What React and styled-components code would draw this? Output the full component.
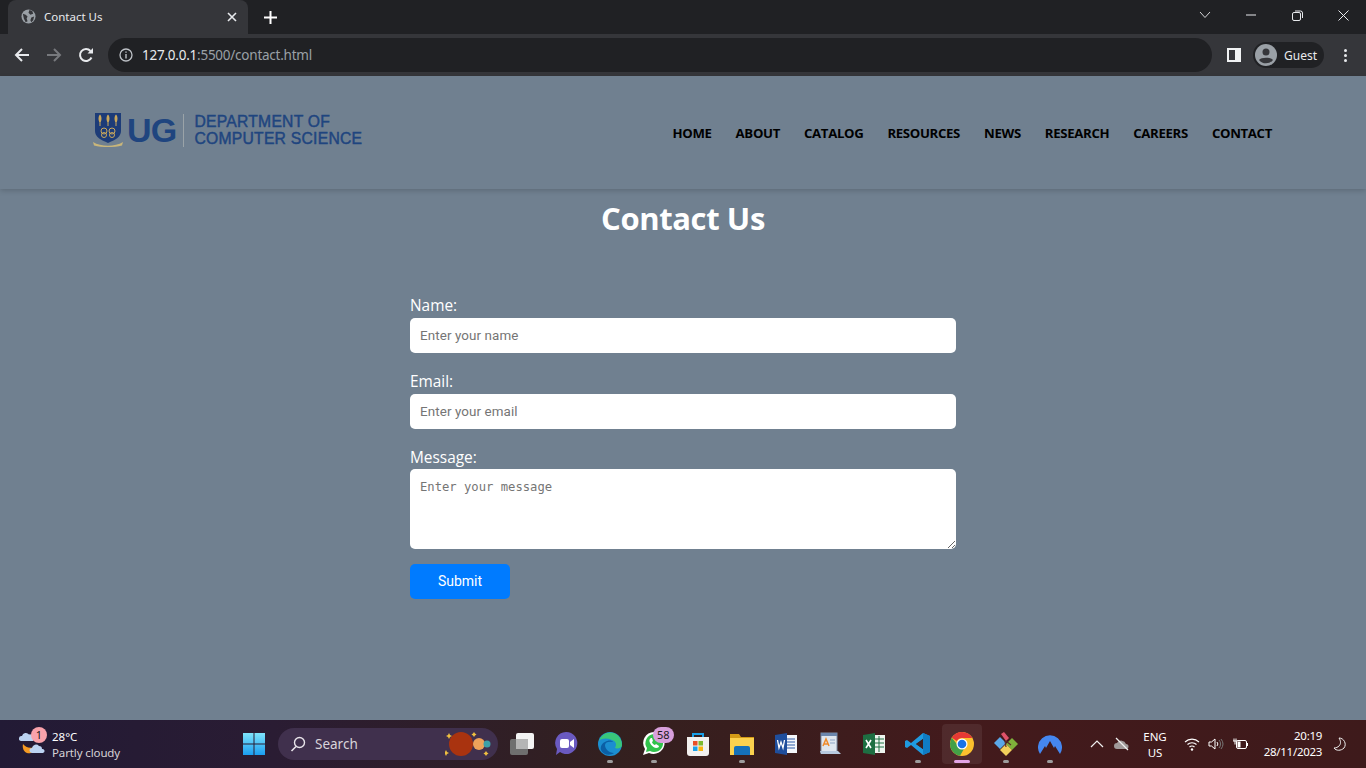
import styled, { createGlobalStyle } from "styled-components";

const GlobalStyle = createGlobalStyle`
  html, body {
    margin: 0;
    padding: 0;
    height: 100%;
    overflow: hidden;
    background: #708090;
  }
  * {
    box-sizing: border-box;
  }
`;

const Screen = styled.div`
  width: 1366px;
  height: 768px;
  display: flex;
  flex-direction: column;
  overflow: hidden;
  font-family: "Open Sans", sans-serif;
`;

/* browser chrome */
const TabStrip = styled.div`
  height: 34px;
  background: #202124;
  display: flex;
  align-items: flex-end;
  padding-left: 8px;
`;

const Tab = styled.div`
  width: 240px;
  height: 34px;
  background: #35363a;
  border-radius: 8px 8px 0 0;
  display: flex;
  align-items: center;
  padding: 0 11px 1px 13px;
  color: #e8eaed;
  font-size: 11.5px;
  font-family: "Noto Sans", sans-serif;
`;

const TabTitle = styled.span`
  flex: 1;
  margin-left: 8px;
`;

const NewTab = styled.div`
  width: 44px;
  height: 34px;
  display: flex;
  align-items: center;
  justify-content: center;
`;

const WindowButtons = styled.div`
  margin-left: auto;
  height: 34px;
  display: flex;
  align-items: center;
`;

const WindowButton = styled.div`
  width: 46px;
  height: 30px;
  margin-bottom: 4px;
  display: flex;
  align-items: center;
  justify-content: center;
`;

const Toolbar = styled.div`
  height: 42px;
  background: #35363a;
  display: flex;
  align-items: center;
  padding: 0 8px 0 6px;
`;

const NavIcon = styled.div`
  width: 32px;
  height: 32px;
  display: flex;
  align-items: center;
  justify-content: center;
`;

const AddressBar = styled.div`
  width: 1104px;
  height: 34px;
  margin-left: 6px;
  background: #202124;
  border-radius: 17px;
  display: flex;
  align-items: center;
  padding-left: 11px;
  font-size: 13.5px;
  font-family: "Noto Sans", sans-serif;
  letter-spacing: -0.24px;
`;

const Host = styled.span`
  margin-left: 9px;
  color: #e8eaed;
`;

const UrlPath = styled.span`
  color: #9aa0a6;
`;

const ProfileArea = styled.div`
  flex: 1;
  display: flex;
  align-items: center;
  padding-left: 15px;
`;

const GuestPill = styled.div`
  margin-left: 12px;
  width: 71px;
  height: 26px;
  background: #202124;
  border-radius: 13px;
  display: flex;
  align-items: center;
  padding-left: 2px;
  gap: 7px;
  color: #e8eaed;
  font-size: 12px;
  font-family: "Noto Sans", sans-serif;
`;

const MenuDots = styled.div`
  margin-left: auto;
  margin-right: 11px;
  display: flex;
  flex-direction: column;
  gap: 2px;
  i {
    display: block;
    width: 3px;
    height: 3px;
    border-radius: 50%;
    background: #e8eaed;
  }
`;

/* page */
const Page = styled.div`
  flex: 1;
  background: #708090;
  display: flex;
  flex-direction: column;
  align-items: center;
`;

const SiteHeader = styled.header`
  width: 100%;
  height: 113px;
  flex-shrink: 0;
  display: flex;
  align-items: center;
  justify-content: space-between;
  padding: 0 94px 0 93px;
  box-shadow: 0 2px 5px rgba(0, 0, 0, 0.16);
`;

const Logo = styled.div`
  display: flex;
  align-items: center;
  color: #1f457f;
  font-family: "Liberation Sans", Arial, sans-serif;
  margin-bottom: 5px;
`;

const LogoMark = styled.span`
  font-size: 34px;
  font-weight: 700;
  line-height: 34px;
  margin-left: 4px;
  letter-spacing: -0.8px;
`;

const LogoRule = styled.div`
  width: 1px;
  height: 33px;
  background: #9aa3a8;
  margin: 0 10px 0 7px;
`;

const LogoText = styled.div`
  font-size: 15.7px;
  line-height: 17px;
  font-weight: 400;
  -webkit-text-stroke: 0.45px #1f457f;
  letter-spacing: 0.25px;
`;

const Nav = styled.nav`
  display: flex;
  gap: 24px;
  margin-top: 1px;
`;

const NavLink = styled.a`
  color: #000;
  font-size: 13.2px;
  font-weight: 700;
  font-family: "Open Sans", sans-serif;
  letter-spacing: -0.33px;
  text-decoration: none;
`;

const Title = styled.h1`
  margin: 7px 0 0;
  color: #fff;
  font-size: 31px;
  line-height: 44px;
  font-weight: 700;
  font-family: "Open Sans", sans-serif;
  letter-spacing: -0.4px;
`;

const Form = styled.form`
  width: 546px;
  margin-top: 57px;
  display: flex;
  flex-direction: column;
`;

const Label = styled.label`
  color: #fff;
  font-size: 15.4px;
  line-height: 17px;
  height: ${(p) => p.$height}px;
  margin-top: ${(p) => p.$gap}px;
  font-family: "Open Sans", sans-serif;
`;

const Input = styled.input`
  height: 35px;
  border: 0;
  border-radius: 5px;
  background: #fff;
  padding: 0 10px;
  font-size: 13.4px;
  font-family: "Roboto", sans-serif;
  letter-spacing: 0.1px;
  &::placeholder {
    color: #757575;
    opacity: 1;
  }
`;

const TextArea = styled.textarea`
  height: 80px;
  border: 0;
  border-radius: 5px;
  background: #fff;
  padding: 11px 10px;
  font-size: 12.2px;
  line-height: 14px;
  font-family: "DejaVu Sans Mono", monospace;
  &::placeholder {
    color: #757575;
    opacity: 1;
  }
`;

const Submit = styled.button`
  width: 100px;
  height: 35px;
  margin-top: 15px;
  padding: 0 0 1px;
  border: 0;
  border-radius: 5px;
  background: #007bff;
  color: #fff;
  font-size: 14px;
  font-weight: 400;
  font-family: "Roboto", sans-serif;
`;

/* taskbar */
const Taskbar = styled.div`
  height: 48px;
  flex-shrink: 0;
  display: flex;
  align-items: center;
  background: linear-gradient(90deg, #221a35 0%, #2a1c33 20%, #33201f 45%, #431a1c 70%, #3e1a1b 100%);
  font-family: "Noto Sans", sans-serif;
`;

const Weather = styled.div`
  position: relative;
  width: 232px;
  height: 48px;
  display: flex;
  align-items: center;
  padding-left: 19px;
`;

const WeatherText = styled.div`
  margin: 2px 0 0 5px;
  color: #fff;
  font-size: 11.5px;
  line-height: 16px;
  span {
    display: block;
    color: #d6d2d6;
    letter-spacing: -0.12px;
  }
`;

const Badge = styled.div`
  position: absolute;
  height: 16px;
  min-width: 16px;
  border-radius: 8px;
  background: ${(p) => p.$bg};
  color: #1a1a1a;
  font-size: 11px;
  line-height: 16px;
  text-align: center;
  padding: 0 ${(p) => p.$pad}px;
  left: ${(p) => p.$left}px;
  top: ${(p) => p.$top}px;
`;

const TaskCell = styled.div`
  position: relative;
  width: ${(p) => (p.$active ? 40 : 44)}px;
  height: 40px;
  margin: 0 ${(p) => (p.$active ? 2 : 0)}px;
  display: flex;
  align-items: center;
  justify-content: center;
  border-radius: 4px;
  background: ${(p) => (p.$active ? "rgba(255,255,255,0.07)" : "transparent")};
  &::after {
    content: "";
    display: ${(p) => (p.$dot || p.$active ? "block" : "none")};
    position: absolute;
    bottom: 1px;
    left: 50%;
    transform: translateX(-50%);
    width: ${(p) => (p.$active ? 16 : 6)}px;
    height: 3px;
    border-radius: 2px;
    background: ${(p) => (p.$active ? "#e3a5e6" : "#9d9d9d")};
  }
`;

const SearchBox = styled.div`
  position: relative;
  width: 220px;
  height: 32px;
  margin: 0 2px;
  border-radius: 16px;
  background: #40304d;
  display: flex;
  align-items: center;
  padding-left: 12px;
  gap: 9px;
  color: #d8d4da;
  font-size: 13.5px;
`;

const SearchArt = styled.svg`
  position: absolute;
  right: 5px;
  top: 2px;
`;

const Tray = styled.div`
  flex: 1;
  display: flex;
  align-items: center;
  padding-left: 13px;
  color: #fff;
`;

const TrayIcon = styled.div`
  width: 24px;
  height: 24px;
  margin-left: ${(p) => p.$gap || 0}px;
  display: flex;
  align-items: center;
  justify-content: center;
`;

const Lang = styled.div`
  width: 50px;
  margin: 2px 0 0 -3px;
  text-align: center;
  font-size: 11.5px;
  line-height: 16px;
`;

const Clock = styled.div`
  width: 70px;
  text-align: right;
  font-size: 11.5px;
  line-height: 16px;
  letter-spacing: -0.3px;
`;

/* drawings */
const Globe = () => (
  <svg width="15" height="15" viewBox="0 0 16 16">
    <circle cx="8" cy="8" r="7.500" fill="#9aa0a6" />
    <path d="M2 5l3 1 2 2-1 2 1 3-2 1-2-4zM9 1l3 1 1 3-3 1-2-2zM11 9l3-1-1 4-2 2-1-2z" fill="#35363a" />
  </svg>
);

const Crest = () => (
  <svg width="30" height="36" viewBox="0 0 30 36">
    <path d="M2 1h26v18c0 6-6 9-13 12C8 28 2 25 2 19z" fill="#1d3c78" />
    <path d="M7 2.500c2 2 2 6 0 9-2-3-2-7 0-9zM15 2.500c2 2 2 6 0 9-2-3-2-7 0-9zM23 2.500c2 2 2 6 0 9-2-3-2-7 0-9z" fill="#c9a75c" />
    <path d="M7 11v3M15 11v3M23 11v3" stroke="#c9a75c" />
    <g fill="none" stroke="#c9a75c" strokeWidth="1">
      <circle cx="11" cy="19" r="3" />
      <circle cx="19" cy="19" r="3" />
      <circle cx="11" cy="23" r="2.500" />
      <circle cx="19" cy="23" r="2.500" />
    </g>
    <path d="M0 30c8 5 22 5 30 0l-1 3.500c-8 2-20 2-28 0z" fill="#c9b67a" />
  </svg>
);

const WeatherIcon = () => (
  <svg width="28" height="28" viewBox="0 0 28 28">
    <path d="M4 14c3 4 8 5 14 2-2 6-6 8-10 7-3-1-5-5-4-9z" fill="#f59a23" />
    <path d="M2 11a2.500 2.500 0 0 1 1-5 4 4 0 0 1 7-1.500A3 3 0 0 1 14 7v4z" fill="#bcd3f2" />
    <path d="M13 23a2.500 2.500 0 0 1 0-5 4 4 0 0 1 7-2 3 3 0 0 1 3 3 2 2 0 0 1 1 4z" fill="#bcd3f2" />
  </svg>
);

const WinLogo = () => (
  <svg width="24" height="24" viewBox="0 0 24 24">
    <defs>
      <linearGradient id="win" x1="0" y1="0" x2="0" y2="1">
        <stop offset="0" stopColor="#7fe4fb" />
        <stop offset="1" stopColor="#1a9df0" />
      </linearGradient>
    </defs>
    <path d="M1 1h10.500v10.500H1zM12.500 1H23v10.500H12.500zM1 12.500h10.500V23H1zM12.500 12.500H23V23H12.500z" fill="url(#win)" />
  </svg>
);

const TaskView = () => (
  <svg width="26" height="24" viewBox="0 0 26 24">
    <rect x="1" y="7" width="18" height="16" rx="2" fill="#6f6f6f" />
    <rect x="7" y="1" width="18" height="16" rx="2" fill="#f4f4f4" />
    <rect x="7" y="7" width="12" height="10" fill="#b5b5b5" />
  </svg>
);

const MeetIcon = () => (
  <svg width="24" height="26" viewBox="0 0 24 26">
    <path d="M12 1a11 11 0 1 1-6 20l-4 3 1-6A11 11 0 0 1 12 1z" fill="#6a5ac0" />
    <rect x="6" y="8" width="9" height="9" rx="2" fill="#fff" />
    <path d="M16 11l4-3v9l-4-3z" fill="#fff" />
  </svg>
);

const EdgeIcon = () => (
  <svg width="24" height="24" viewBox="0 0 24 24">
    <circle cx="12" cy="12" r="12" fill="#1b8ed0" />
    <path d="M1 9C3 2 10-1 16 1c5 2 8 7 8 12 0 3-4 4-7 3 2-3 1-7-3-8C9 6 4 6 1 9z" fill="#39c67a" />
    <path d="M7 13c0 4 4 8 9 8-4 3-11 2-13-3-1-3 1-7 4-8 3-2 7-2 8 0-4-1-8 0-8 3z" fill="#0b5fa5" />
  </svg>
);

const WhatsAppIcon = () => (
  <svg width="24" height="26" viewBox="0 0 24 26">
    <path d="M12 1a11 11 0 1 1-5 21l-6 2 2-6A11 11 0 0 1 12 1z" fill="#fff" />
    <path d="M12 3a9 9 0 1 1-4 17l-4 1 1-4A9 9 0 0 1 12 3z" fill="#31c34c" />
    <path d="M9 7c-2 1-2 3-1 5s4 5 6 5 3-1 3-2l-3-2-1 1c-1 0-3-2-3-3l1-1-1-3z" fill="#fff" />
  </svg>
);

const StoreIcon = () => (
  <svg width="24" height="26" viewBox="0 0 24 26">
    <path d="M7 7V3h10v4" fill="none" stroke="#1aa0e8" strokeWidth="2" />
    <path d="M1 6h22v16a3 3 0 0 1-3 3H4a3 3 0 0 1-3-3z" fill="#f3f1ef" />
    <rect x="7" y="10" width="4.500" height="4.500" fill="#ea4f25" />
    <rect x="12.500" y="10" width="4.500" height="4.500" fill="#7dba2f" />
    <rect x="7" y="15.500" width="4.500" height="4.500" fill="#1aa0e8" />
    <rect x="12.500" y="15.500" width="4.500" height="4.500" fill="#f9b50f" />
  </svg>
);

const FolderIcon = () => (
  <svg width="24" height="22" viewBox="0 0 24 22">
    <path d="M0 1h9l2 3h13v18H0z" fill="#d39a16" />
    <path d="M0 5h24v17H0z" fill="#fbd14e" />
    <path d="M4 15a2 2 0 0 1 2-2h12a2 2 0 0 1 2 2v7H4z" fill="#1570b8" />
  </svg>
);

const WordIcon = () => (
  <svg width="24" height="24" viewBox="0 0 24 24">
    <rect x="10" y="3" width="13" height="18" fill="#f5f7fb" />
    <path d="M13 7h8M13 10h8M13 13h8M13 16h8" stroke="#2f5da8" strokeWidth="1.200" />
    <path d="M1 3l12-2v22L1 21z" fill="#1f4e9c" />
    <path d="M3.500 8l1.500 8 2-6 2 6 1.500-8" fill="none" stroke="#fff" strokeWidth="1.300" />
  </svg>
);

const AccessoryIcon = () => (
  <svg width="22" height="24" viewBox="0 0 22 24">
    <rect x="2" y="1" width="16" height="20" fill="#dfe6ef" stroke="#7d8ca3" />
    <path d="M2 1h16v3H2z" fill="#6b86ad" />
    <path d="M4 14l3-7 3 7M5 12h4" fill="none" stroke="#ef8a2b" strokeWidth="1.500" />
    <path d="M11 8h5M11 11h5" stroke="#8fa5c6" />
    <path d="M1 19h18l3 3H2z" fill="#b7c9df" />
  </svg>
);

const ExcelIcon = () => (
  <svg width="24" height="24" viewBox="0 0 24 24">
    <rect x="10" y="3" width="13" height="18" fill="#eef5ef" />
    <path d="M13 7h9M13 11h9M13 15h9M17 4v16" stroke="#1f7244" />
    <path d="M1 3l12-2v22L1 21z" fill="#1d6f42" />
    <path d="M4 8l5 8M9 8l-5 8" stroke="#fff" strokeWidth="1.600" />
  </svg>
);

const VsCodeIcon = () => (
  <svg width="26" height="24" viewBox="0 0 26 24">
    <path d="M18 1l7 3v16l-7 3L6 13l-4 3-2-1V9l2-1 4 3zM18 7l-7 5 7 5z" fill="#1f9ae0" />
    <path d="M18 1l7 3v16l-7 3z" fill="#0f7cc4" />
    <path d="M18 7l-7 5 7 5z" fill="#3c2020" />
  </svg>
);

const ChromeIcon = () => (
  <svg width="24" height="24" viewBox="0 0 24 24">
    <circle cx="12" cy="12" r="12" fill="#fbc02d" />
    <path d="M12 0a12 12 0 0 1 10.400 6H12a6 6 0 0 0-5.200 3L1.800 5.700A12 12 0 0 1 12 0z" fill="#e53935" />
    <path d="M1.800 5.700A12 12 0 0 0 10 23.800L15 15a6 6 0 0 1-8.200-3z" fill="#43a047" />
    <circle cx="12" cy="12" r="5.500" fill="#fff" />
    <circle cx="12" cy="12" r="4.300" fill="#1a73e8" />
  </svg>
);

const GitIcon = () => (
  <svg width="26" height="26" viewBox="0 0 26 26">
    <path d="M7 6l6 6-6 6-6-6z" fill="#5ba7e8" />
    <path d="M19 7l6 6-6 6-6-6z" fill="#7fb03a" />
    <path d="M13 13l6 6-6 6-6-6z" fill="#f2cf5b" />
    <path d="M8 3l3-2 5 6-3 3z" fill="#e0526a" />
    <path d="M12 10l1 6M13 10l5 4" stroke="#5a2a2a" strokeWidth="1.200" />
  </svg>
);

const NordIcon = () => (
  <svg width="24" height="24" viewBox="0 0 24 24">
    <path d="M2 22a12 12 0 1 1 20 0l-5-8-1 2-4-7-4 7-1-2z" fill="#4587f0" />
  </svg>
);

const taskApps = [
  { key: "taskview", icon: <TaskView /> },
  { key: "meet", icon: <MeetIcon /> },
  { key: "edge", icon: <EdgeIcon />, dot: true },
  { key: "whatsapp", icon: <WhatsAppIcon />, dot: true, badge: "58" },
  { key: "store", icon: <StoreIcon /> },
  { key: "folder", icon: <FolderIcon />, dot: true },
  { key: "word", icon: <WordIcon /> },
  { key: "accessory", icon: <AccessoryIcon /> },
  { key: "excel", icon: <ExcelIcon /> },
  { key: "vscode", icon: <VsCodeIcon />, dot: true },
  { key: "chrome", icon: <ChromeIcon />, active: true },
  { key: "git", icon: <GitIcon />, dot: true },
  { key: "nord", icon: <NordIcon />, dot: true },
];

const navItems = ["HOME", "ABOUT", "CATALOG", "RESOURCES", "NEWS", "RESEARCH", "CAREERS", "CONTACT"];

function App() {
  return (
    <Screen>
      <GlobalStyle />
      <TabStrip>
        <Tab>
          <Globe />
          <TabTitle>Contact Us</TabTitle>
          <svg width="10" height="10" viewBox="0 0 10 10">
            <path d="M1 1l8 8M9 1l-8 8" stroke="#e8eaed" strokeWidth="1.600" />
          </svg>
        </Tab>
        <NewTab>
          <svg width="13" height="13" viewBox="0 0 13 13">
            <path d="M6.500 0v13M0 6.500h13" stroke="#fff" strokeWidth="2" />
          </svg>
        </NewTab>
        <WindowButtons>
          <WindowButton>
            <svg width="12" height="8" viewBox="0 0 12 8">
              <path d="M1 1l5 5.500L11 1" fill="none" stroke="#d5d6d8" />
            </svg>
          </WindowButton>
          <WindowButton>
            <svg width="10" height="2" viewBox="0 0 10 2">
              <path d="M0 1h10" stroke="#e8eaed" />
            </svg>
          </WindowButton>
          <WindowButton>
            <svg width="11" height="11" viewBox="0 0 11 11">
              <rect x="0.500" y="2.500" width="8" height="8" rx="1.500" fill="none" stroke="#e8eaed" />
              <path d="M3 1h5.500a2 2 0 0 1 2 2v5" fill="none" stroke="#e8eaed" />
            </svg>
          </WindowButton>
          <WindowButton>
            <svg width="11" height="11" viewBox="0 0 11 11">
              <path d="M0.500 0.500l10 10M10.500 0.500l-10 10" stroke="#e8eaed" />
            </svg>
          </WindowButton>
        </WindowButtons>
      </TabStrip>

      <Toolbar>
        <NavIcon>
          <svg width="16" height="16" viewBox="0 0 16 16">
            <path d="M15 8H2M8 2L2 8l6 6" fill="none" stroke="#e8eaed" strokeWidth="2" />
          </svg>
        </NavIcon>
        <NavIcon>
          <svg width="16" height="16" viewBox="0 0 16 16">
            <path d="M1 8h13M8 2l6 6-6 6" fill="none" stroke="#77797d" strokeWidth="2" />
          </svg>
        </NavIcon>
        <NavIcon>
          <svg width="16" height="16" viewBox="0 0 16 16">
            <path d="M13.500 10.500A6 6 0 1 1 12.500 4" fill="none" stroke="#e8eaed" strokeWidth="2" />
            <path d="M9.500 6.500h5.500V1z" fill="#e8eaed" />
          </svg>
        </NavIcon>
        <AddressBar>
          <svg width="14" height="14" viewBox="0 0 14 14">
            <circle cx="7" cy="7" r="6" fill="none" stroke="#bdc1c6" strokeWidth="1.300" />
            <path d="M7 6v4.500M7 3.500v1.300" stroke="#bdc1c6" strokeWidth="1.400" />
          </svg>
          <Host>127.0.0.1</Host>
          <UrlPath>:5500/contact.html</UrlPath>
        </AddressBar>
        <ProfileArea>
          <svg width="14" height="14" viewBox="0 0 14 14">
            <path d="M0 0h14v14H0zM2 2v10h6V2z" fill="#f1f3f4" fillRule="evenodd" />
          </svg>
          <GuestPill>
            <svg width="22" height="22" viewBox="0 0 22 22">
              <circle cx="11" cy="11" r="11" fill="#9aa0a6" />
              <circle cx="11" cy="8" r="3.500" fill="#35363a" />
              <path d="M4 16c2-3 12-3 14 0a9 9 0 0 1-14 0z" fill="#35363a" />
            </svg>
            Guest
          </GuestPill>
          <MenuDots>
            <i />
            <i />
            <i />
          </MenuDots>
        </ProfileArea>
      </Toolbar>

      <Page>
        <SiteHeader>
          <Logo>
            <Crest />
            <LogoMark>UG</LogoMark>
            <LogoRule />
            <LogoText>
              DEPARTMENT OF
              <br />
              COMPUTER SCIENCE
            </LogoText>
          </Logo>
          <Nav>
            {navItems.map((item) => (
              <NavLink key={item} href="#">
                {item}
              </NavLink>
            ))}
          </Nav>
        </SiteHeader>

        <Title>Contact Us</Title>

        <Form onSubmit={(e) => e.preventDefault()}>
          <Label $gap={0} $height={21} htmlFor="name">Name:</Label>
          <Input id="name" type="text" placeholder="Enter your name" />
          <Label $gap={20} $height={21} htmlFor="email">Email:</Label>
          <Input id="email" type="email" placeholder="Enter your email" />
          <Label $gap={20} $height={20} htmlFor="message">Message:</Label>
          <TextArea id="message" placeholder="Enter your message" />
          <Submit type="submit">Submit</Submit>
        </Form>
      </Page>

      <Taskbar>
        <Weather>
          <WeatherIcon />
          <Badge $bg="#f9a2ab" $pad={2} $left={31} $top={7}>1</Badge>
          <WeatherText>
            28°C
            <span>Partly cloudy</span>
          </WeatherText>
        </Weather>
        <TaskCell>
          <WinLogo />
        </TaskCell>
        <SearchBox>
          <svg width="16" height="16" viewBox="0 0 16 16">
            <circle cx="9.500" cy="6.500" r="5" fill="none" stroke="#e8e4ea" strokeWidth="1.400" />
            <path d="M6 10.500L1.500 15" stroke="#e8e4ea" strokeWidth="1.600" />
          </svg>
          Search
          <SearchArt width="48" height="28" viewBox="0 0 48 28">
            <circle cx="16" cy="14" r="12" fill="#a9330f" />
            <circle cx="34" cy="14" r="6" fill="#eda25a" />
            <circle cx="42" cy="14" r="3.500" fill="#3ca0a8" />
            <path d="M4 3l1 2 2 1-2 1-1 2-1-2-2-1 2-1zM1 20l1 2 2 1-2 1-1 2-1-2-2-1 2-1zM29 2l1 1.500 1.500 1-1.500 1-1 1.500-1-1.500-1.500-1 1.500-1zM41 21l1 1.500 1.500 1-1.500 1-1 1.500-1-1.500-1.500-1 1.500-1z" fill="#f0c040" />
          </SearchArt>
        </SearchBox>
        {taskApps.map((app) => (
          <TaskCell key={app.key} $dot={app.dot} $active={app.active}>
            {app.icon}
            {app.badge && (
              <Badge $bg="#d8a0dc" $pad={4} $left={21} $top={3}>
                {app.badge}
              </Badge>
            )}
          </TaskCell>
        ))}
        <Tray>
          <TrayIcon>
            <svg width="14" height="8" viewBox="0 0 14 8">
              <path d="M1 7l6-6 6 6" fill="none" stroke="#f0f0f0" strokeWidth="1.200" />
            </svg>
          </TrayIcon>
          <TrayIcon>
            <svg width="17" height="14" viewBox="0 0 17 14">
              <path d="M4 12a3 3 0 0 1 0-6 5 5 0 0 1 9 1 2.500 2.500 0 0 1 0 5z" fill="#a09a9a" />
              <path d="M3 1l12 12" stroke="#f0f0f0" strokeWidth="1.200" />
            </svg>
          </TrayIcon>
          <Lang>
            ENG
            <br />
            US
          </Lang>
          <TrayIcon>
            <svg width="16" height="14" viewBox="0 0 16 14">
              <path d="M1 5a10 10 0 0 1 14 0M3.500 7.500a6.500 6.500 0 0 1 9 0M5.500 10a3.500 3.500 0 0 1 5 0" fill="none" stroke="#fff" strokeWidth="1.100" />
              <circle cx="8" cy="12.500" r="1.200" fill="#fff" />
            </svg>
          </TrayIcon>
          <TrayIcon>
            <svg width="16" height="14" viewBox="0 0 16 14">
              <path d="M1 5h2.500L7 2v10L3.500 9H1z" fill="none" stroke="#fff" />
              <path d="M9 5a3 3 0 0 1 0 4" fill="none" stroke="#fff" />
              <path d="M11 3a6 6 0 0 1 0 8M13 2a8 8 0 0 1 0 10" fill="none" stroke="#777" />
            </svg>
          </TrayIcon>
          <TrayIcon>
            <svg width="16" height="14" viewBox="0 0 16 14">
              <rect x="4.500" y="3.500" width="10" height="8" rx="1.500" fill="none" stroke="#fff" />
              <rect x="5.500" y="4.500" width="3" height="6" fill="#fff" />
              <path d="M1 4h4M2 1.500V4M4 1.500V4M3 4v3.500" stroke="#fff" />
              <path d="M15.500 6v3" stroke="#fff" />
            </svg>
          </TrayIcon>
          <Clock>
            20:19
            <br />
            28/11/2023
          </Clock>
          <TrayIcon $gap={5}>
            <svg width="16" height="16" viewBox="0 0 16 16">
              <path d="M8 2c2 3 2 6 0 8-1 1-3 2-5 2 2 3 7 3 10 0 3-4 0-10-5-10z" fill="none" stroke="#f0f0f0" />
            </svg>
          </TrayIcon>
        </Tray>
      </Taskbar>
    </Screen>
  );
}

export default App;
